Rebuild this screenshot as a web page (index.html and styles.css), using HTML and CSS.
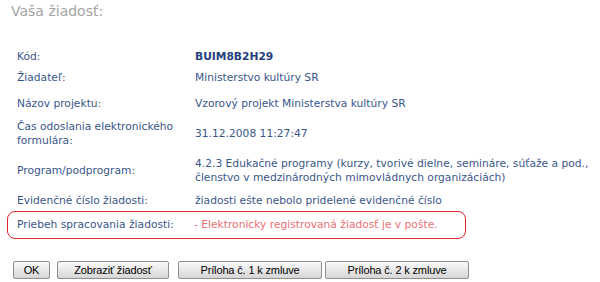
FILE: index.html
```html
<!DOCTYPE html>
<html lang="sk">
<head>
<meta charset="utf-8">
<title>Vaša žiadosť</title>
<link rel="stylesheet" href="styles.css">
</head>
<body>
<div class="page">
  <h1 class="title">Vaša žiadosť:</h1>
  <div class="details">
    <div class="row r-kod"><div class="lbl">Kód:</div><div class="val code">BUIM8B2H29</div></div>
    <div class="row r-ziad"><div class="lbl">Žiadateľ:</div><div class="val">Ministerstvo kultúry SR</div></div>
    <div class="row r-nazov"><div class="lbl">Názov projektu:</div><div class="val">Vzorový projekt Ministerstva kultúry SR</div></div>
    <div class="row r-cas"><div class="lbl">Čas odoslania elektronického formulára:</div><div class="val">31.12.2008 11:27:47</div></div>
    <div class="row r-prog"><div class="lbl">Program/podprogram:</div><div class="val">4.2.3 Edukačné programy (kurzy, tvorivé dielne, semináre, súťaže a pod., členstvo v medzinárodných mimovládnych organizáciách)</div></div>
    <div class="row r-evid"><div class="lbl">Evidenčné číslo žiadosti:</div><div class="val">žiadosti ešte nebolo pridelené evidenčné číslo</div></div>
    <div class="row r-status"><div class="lbl">Priebeh spracovania žiadosti:</div><div class="val status">- Elektronicky registrovaná žiadosť je v pošte.</div></div>
  </div>
  <div class="actions">
    <button class="btn b-ok">OK</button>
    <button class="btn b-view">Zobraziť žiadosť</button>
    <button class="btn b-att1">Príloha č. 1 k zmluve</button>
    <button class="btn b-att2">Príloha č. 2 k zmluve</button>
  </div>
</div>
</body>
</html>
```

FILE: styles.css
```css
html, body {
  margin: 0;
  padding: 0;
  background: #ffffff;
}
.page {
  padding: 3px 0 0 11px;
  font-family: "DejaVu Sans", Verdana, sans-serif;
}
.title {
  margin: 0;
  font-size: 14px;
  font-weight: normal;
  color: #a4a4a4;
  line-height: 17px;
}
.details {
  margin-top: 30px;
  width: 585px;
  font-size: 10.7px;
  line-height: 14px;
  color: #3a5689;
}
.row {
  display: grid;
  grid-template-columns: 178px 1fr;
  align-items: center;
  padding-left: 6px;
}
.lbl {
  padding-right: 10px;
}
.code {
  font-weight: bold;
  color: #23407c;
}
.r-ziad { margin-top: 7px; }
.r-nazov { margin-top: 12px; }
.r-cas { margin-top: 9px; }
.r-prog { margin-top: 9px; }
.r-evid { margin-top: 9px; }
.r-status {
  margin-top: 3px;
  margin-left: -4px;
  width: 448px;
  padding: 6px 0 6px 9px;
  grid-template-columns: 177px 1fr;
  border: 1.5px solid #e2262e;
  border-radius: 8px;
}
.status {
  color: #ee6f73;
}
.actions {
  display: flex;
  margin-top: 22px;
  padding-left: 2px;
}
.btn {
  height: 18px;
  padding: 0;
  font-family: "Liberation Sans", Arial, sans-serif;
  font-size: 11px;
  letter-spacing: -0.15px;
  color: #000000;
  background: linear-gradient(#fafafa, #e6e6e6 55%, #d6d6d6);
  border: 1px solid #8f8f8f;
  border-radius: 2px;
}
.b-ok { width: 37px; }
.b-view { width: 112px; margin-left: 7px; }
.b-att1 { width: 144px; margin-left: 9px; }
.b-att2 { width: 144px; margin-left: 3px; }
```
